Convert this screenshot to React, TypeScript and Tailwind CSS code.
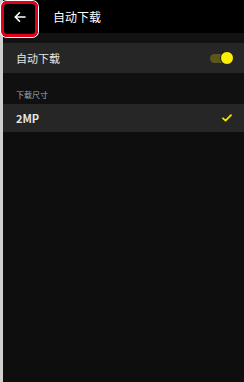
import React from "react";

export default function App() {
  return (
    <div
      className="relative flex w-[244px] h-[382px] bg-[#0e0e0e] overflow-hidden"
      style={{ fontFamily: '"Noto Sans CJK SC", "Noto Sans", sans-serif' }}
    >
      <div className="w-[3px] shrink-0 bg-[#cfcfcf]" />
      <div className="flex-1 flex flex-col">
        <div className="h-[33px] bg-black flex items-center">
          <div className="w-[32px] flex items-center justify-center pl-[1px]">
            <svg width="12" height="12" viewBox="0 0 12 12" fill="none" stroke="white" strokeWidth="1.6" strokeLinecap="round" strokeLinejoin="round">
              <path d="M11 6H1.5" />
              <path d="M5.5 1.8L1.3 6l4.2 4.2" />
            </svg>
          </div>
          <span className="ml-[18px] text-[12px] text-white leading-none">自动下载</span>
        </div>
        <div className="h-[10px] bg-[#121212]" />
        <div className="h-[30px] bg-[#262626] flex items-center justify-between pl-[13px] pr-[10px]">
          <span className="text-[11px] text-[#e6e6e6] leading-none">自动下载</span>
          <div className="relative w-[24px] h-[14px] flex items-center">
            <div className="w-[16px] h-[9px] rounded-full bg-[#5b5619]" />
            <div className="absolute right-0 top-0 w-[14px] h-[14px] rounded-full bg-[#fff000] border border-[#1a1a1a]" />
          </div>
        </div>
        <div className="h-[31px] bg-[#101010] flex items-center pl-[13px]">
          <span className="text-[8px] text-[#a8a8a8] leading-none mt-[12px]">下载尺寸</span>
        </div>
        <div className="h-[28px] bg-[#262626] flex items-center justify-between pl-[13px] pr-[12px]">
          <span className="text-[11px] text-[#e6e6e6] leading-none font-bold">2MP</span>
          <svg width="10" height="8" viewBox="0 0 10 8" fill="none" stroke="#f5e600" strokeWidth="1.8" strokeLinecap="round" strokeLinejoin="round">
            <path d="M1 4.3l2.6 2.4L9 1.2" />
          </svg>
        </div>
        <div className="flex-1 bg-[#0e0e0e]" />
      </div>
      <div className="absolute left-[1px] top-[1px] w-[37px] h-[36px] rounded-[6px] border-[3px] border-[#e4001b] shadow-[0_0_0_1px_white]" />
    </div>
  );
}
